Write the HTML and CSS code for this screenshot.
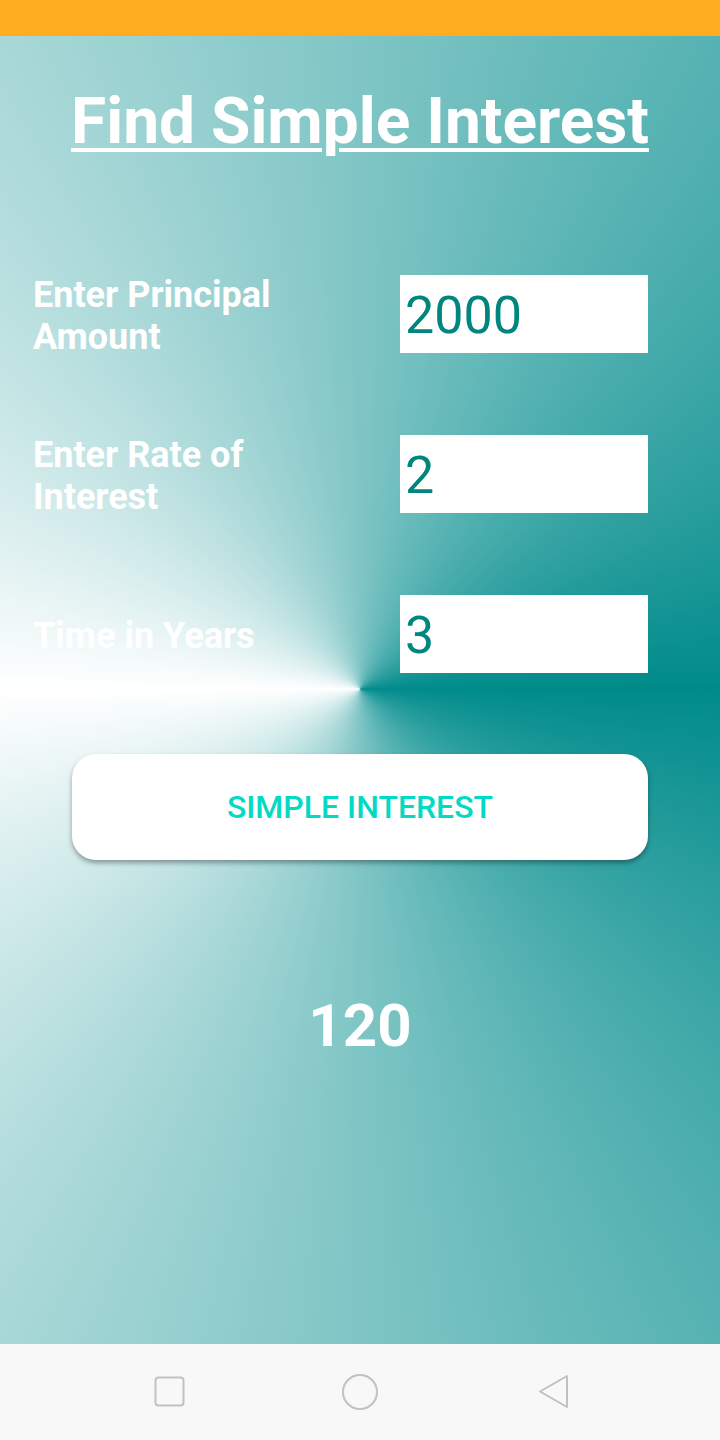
FILE: index.html
```html
<!DOCTYPE html>
<html lang="en">
<head>
<meta charset="utf-8">
<title>Find Simple Interest</title>
<link rel="stylesheet" href="styles.css">
</head>
<body>
<div class="screen">
  <div class="status-bar"></div>
  <main class="content">
    <h1 class="title">Find Simple Interest</h1>
    <div class="form">
      <div class="row">
        <label class="label" for="p">Enter Principal Amount</label>
        <input class="field" id="p" type="text" value="2000">
      </div>
      <div class="row">
        <label class="label" for="r">Enter Rate of Interest</label>
        <input class="field" id="r" type="text" value="2">
      </div>
      <div class="row">
        <label class="label" for="t">Time in Years</label>
        <input class="field" id="t" type="text" value="3">
      </div>
    </div>
    <button class="calc-btn" type="button">SIMPLE INTEREST</button>
    <div class="result">120</div>
  </main>
  <nav class="nav-bar">
    <span class="nav-item">
      <svg width="40" height="40" viewBox="0 0 40 40"><rect x="5.5" y="5.5" width="28" height="28" rx="3" fill="none" stroke="#c1c1c1" stroke-width="2"/></svg>
    </span>
    <span class="nav-item">
      <svg width="40" height="40" viewBox="0 0 40 40"><circle cx="20" cy="20" r="17" fill="none" stroke="#c1c1c1" stroke-width="2"/></svg>
    </span>
    <span class="nav-item">
      <svg width="40" height="40" viewBox="0 0 40 40"><polygon points="37,4 37,35 10,19.5" fill="none" stroke="#c1c1c1" stroke-width="2" stroke-linejoin="round"/></svg>
    </span>
  </nav>
</div>
</body>
</html>
```

FILE: styles.css
```css
* { box-sizing: border-box; }

html, body {
  margin: 0;
  padding: 0;
}

body {
  width: 720px;
  height: 1440px;
  font-family: Roboto, "Noto Sans", "Liberation Sans", sans-serif;
  overflow: hidden;
}

.screen {
  display: flex;
  flex-direction: column;
  width: 720px;
  height: 1440px;
}

.status-bar {
  height: 36px;
  flex: none;
  background: #ffac20;
}

.content {
  flex: 1;
  display: flex;
  flex-direction: column;
  align-items: center;
  background: conic-gradient(from 90deg at 360px 653px, #008b8b 0deg, #ffffff 180deg, #008b8b 360deg);
}

.title {
  margin: 47px 0 0;
  font-size: 64px;
  line-height: 77px;
  font-weight: 700;
  color: #ffffff;
  text-decoration: underline;
  text-decoration-thickness: 4px;
  text-underline-offset: 5px;
  text-align: center;
}

.form {
  width: 100%;
  margin-top: 115px;
  display: flex;
  flex-direction: column;
  gap: 82px;
}

.row {
  display: flex;
  align-items: center;
  justify-content: space-between;
  padding: 0 72px 0 33px;
  height: 78px;
}

.label {
  width: 300px;
  padding-top: 3px;
  font-size: 36px;
  line-height: 42px;
  font-weight: 700;
  color: #ffffff;
}

.field {
  width: 248px;
  height: 78px;
  border: none;
  outline: none;
  background: #ffffff;
  padding: 3px 0 0 5px;
  margin: 0;
  font-family: Roboto, "Noto Sans", sans-serif;
  font-size: 52px;
  font-weight: 400;
  color: #00857f;
  border-radius: 0;
}

.calc-btn {
  margin-top: 81px;
  width: 576px;
  height: 106px;
  border: none;
  border-radius: 24px;
  background: #ffffff;
  box-shadow: 0 3px 5px rgba(0, 0, 0, 0.35);
  font-family: Roboto, "Noto Sans", sans-serif;
  font-size: 32px;
  font-weight: 500;
  color: #03dac5;
  padding: 0;
}

.result {
  margin-top: 131px;
  font-size: 60px;
  line-height: 70px;
  font-weight: 700;
  color: #ffffff;
}

.nav-bar {
  height: 96px;
  flex: none;
  background: #f8f8f8;
  display: flex;
  align-items: center;
  justify-content: center;
  gap: 150px;
}

.nav-item {
  display: flex;
  width: 40px;
  height: 40px;
}
```
